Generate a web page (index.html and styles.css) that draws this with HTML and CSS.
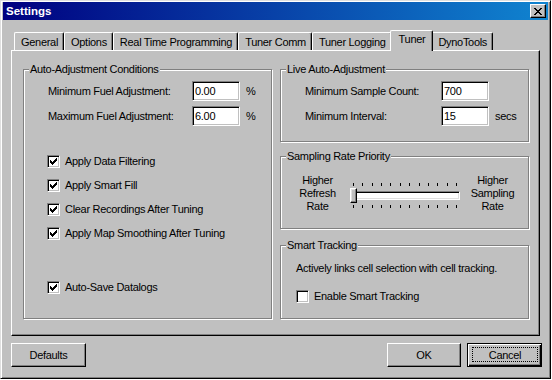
FILE: index.html
```html
<!DOCTYPE html>
<html lang="en">
<head>
    <meta charset="UTF-8">
    <title>Settings</title>
    <link rel="stylesheet" href="styles.css">
</head>
<body>

    <div class="window">
        <!-- Title bar -->
        <div class="titlebar">
            <span class="title">Settings</span>
            <button class="close-btn" title="Close">
                <svg width="8" height="7" viewBox="0 0 8 7"><path d="M0 0h2v1H0zM6 0h2v1H6zM1 1h2v1H1zM5 1h2v1H5zM2 2h4v1H2zM3 3h2v1H3zM2 4h4v1H2zM1 5h2v1H1zM5 5h2v1H5zM0 6h2v1H0zM6 6h2v1H6z" fill="#000"/></svg>
            </button>
        </div>

        <div class="dialog">
            <!-- Tabs -->
            <div class="tabs">
                <div class="tab">General</div>
                <div class="tab">Options</div>
                <div class="tab">Real Time Programming</div>
                <div class="tab">Tuner Comm</div>
                <div class="tab">Tuner Logging</div>
                <div class="tab active">Tuner</div>
                <div class="tab">DynoTools</div>
            </div>

            <div class="panel">
                <!-- Left group -->
                <div class="group group-left">
                    <div class="group-title">Auto-Adjustment Conditions</div>
                    <div class="field-row">
                        <span class="field-label">Minimum Fuel Adjustment:</span>
                        <input class="edit" type="text" value="0.00">
                        <span class="unit">%</span>
                    </div>
                    <div class="field-row">
                        <span class="field-label">Maximum Fuel Adjustment:</span>
                        <input class="edit" type="text" value="6.00">
                        <span class="unit">%</span>
                    </div>

                    <div class="checks">
                        <div class="check-row"><span class="checkbox"><svg width="7" height="7" viewBox="0 0 7 7"><path d="M0 2h1v3H0zM1 3h1v3H1zM2 4h1v3H2zM3 3h1v3H3zM4 2h1v3H4zM5 1h1v3H5zM6 0h1v3H6z" fill="#000"/></svg></span>Apply Data Filtering</div>
                        <div class="check-row"><span class="checkbox"><svg width="7" height="7" viewBox="0 0 7 7"><path d="M0 2h1v3H0zM1 3h1v3H1zM2 4h1v3H2zM3 3h1v3H3zM4 2h1v3H4zM5 1h1v3H5zM6 0h1v3H6z" fill="#000"/></svg></span>Apply Smart Fill</div>
                        <div class="check-row"><span class="checkbox"><svg width="7" height="7" viewBox="0 0 7 7"><path d="M0 2h1v3H0zM1 3h1v3H1zM2 4h1v3H2zM3 3h1v3H3zM4 2h1v3H4zM5 1h1v3H5zM6 0h1v3H6z" fill="#000"/></svg></span>Clear Recordings After Tuning</div>
                        <div class="check-row"><span class="checkbox"><svg width="7" height="7" viewBox="0 0 7 7"><path d="M0 2h1v3H0zM1 3h1v3H1zM2 4h1v3H2zM3 3h1v3H3zM4 2h1v3H4zM5 1h1v3H5zM6 0h1v3H6z" fill="#000"/></svg></span>Apply Map Smoothing After Tuning</div>
                        <div class="check-row autosave"><span class="checkbox"><svg width="7" height="7" viewBox="0 0 7 7"><path d="M0 2h1v3H0zM1 3h1v3H1zM2 4h1v3H2zM3 3h1v3H3zM4 2h1v3H4zM5 1h1v3H5zM6 0h1v3H6z" fill="#000"/></svg></span>Auto-Save Datalogs</div>
                    </div>
                </div>

                <!-- Right column -->
                <div class="right-col">
                    <div class="group group-live">
                        <div class="group-title">Live Auto-Adjustment</div>
                        <div class="field-row">
                            <span class="field-label narrow">Minimum Sample Count:</span>
                            <input class="edit" type="text" value="700">
                        </div>
                        <div class="field-row">
                            <span class="field-label narrow">Minimum Interval:</span>
                            <input class="edit" type="text" value="15">
                            <span class="unit">secs</span>
                        </div>
                    </div>

                    <div class="group group-rate">
                        <div class="group-title">Sampling Rate Priority</div>
                        <div class="rate-row">
                            <div class="rate-label">Higher<br>Refresh<br>Rate</div>
                            <div class="slider">
                                <div class="ticks"><i></i><i></i><i></i><i></i><i></i><i></i><i></i><i></i><i></i><i></i><i></i><i></i></div>
                                <div class="track">
                                    <div class="channel"></div>
                                    <span class="thumb"></span>
                                </div>
                                <div class="ticks"><i></i><i></i><i></i><i></i><i></i><i></i><i></i><i></i><i></i><i></i><i></i><i></i></div>
                            </div>
                            <div class="rate-label">Higher<br>Sampling<br>Rate</div>
                        </div>
                    </div>

                    <div class="group group-smart">
                        <div class="group-title">Smart Tracking</div>
                        <div class="smart-text">Actively links cell selection with cell tracking.</div>
                        <div class="check-row"><span class="checkbox"></span>Enable Smart Tracking</div>
                    </div>
                </div>
            </div>

            <!-- Bottom buttons -->
            <div class="buttons">
                <button class="btn">Defaults</button>
                <div class="btn-group">
                    <button class="btn">OK</button>
                    <button class="btn default"><span class="focus-ring">Cancel</span></button>
                </div>
            </div>
        </div>
    </div>

</body>
</html>
```

FILE: styles.css
```css
/* --- Page --- */
* { box-sizing: border-box; }

body {
    margin: 0;
    background: #fff;
    font-family: "Liberation Sans", Arial, sans-serif;
    font-size: 11px;
    letter-spacing: -0.3px;
    color: #000;
}

/* --- Window frame --- */
.window {
    width: 551px; height: 379px;
    background: #c0c0c0;
    border: 1px solid;
    border-color: #dfdfdf #000 #000 #dfdfdf;
    box-shadow: inset 1px 1px #fff, inset -1px -1px #808080;
    padding: 1px 2px 0 2px;
    display: flex; flex-direction: column;
}

.titlebar {
    height: 18px;
    display: flex; align-items: center; justify-content: space-between;
    padding: 0 2px 0 3px;
    background: linear-gradient(to right, #000080, #1084d0);
}
.title {
    color: #fff; font-weight: bold; font-size: 11.5px; letter-spacing: 0;
}
.close-btn {
    width: 16px; height: 14px; padding: 0;
    display: flex; align-items: center; justify-content: center;
    background: #c0c0c0;
    border: 1px solid; border-color: #fff #000 #000 #fff;
    box-shadow: inset -1px -1px #808080;
}

/* --- Dialog body --- */
.dialog { padding: 10px 8px 0 8px; }

/* --- Tabs --- */
.tabs {
    display: flex; align-items: flex-end;
    padding-left: 3px;
}
.tab {
    height: 18px;
    padding: 1px 5px 0 6px;
    line-height: 17px;
    white-space: nowrap;
    background: #c0c0c0;
    border-top: 1px solid #fff; border-left: 1px solid #fff; border-right: 1px solid #000;
    border-radius: 2px 2px 0 0;
    box-shadow: inset -1px 0 #808080;
}
.tab.active {
    height: 21px;
    margin: 0 -2px -1px -2px;
    padding: 0 7px 0 8px;
    position: relative; z-index: 1;
}

.panel {
    height: 286px;
    display: flex; gap: 8px; align-items: flex-start;
    padding: 18px 10px 0 11px;
    border: 1px solid; border-color: #fff #000 #000 #fff;
    box-shadow: inset -1px -1px #808080;
}

/* --- Group boxes --- */
.group {
    width: 249px;
    border: 1px solid #808080;
    box-shadow: 1px 1px #fff, inset 1px 1px #fff;
    padding-left: 24px;
}
.group-title {
    width: fit-content;
    margin: -7px 0 0 -19px;
    padding: 0 1px;
    line-height: 13px;
    background: #c0c0c0;
}
.group-left { padding-bottom: 24px; }

.field-row {
    display: flex; align-items: center;
    height: 20px; margin-top: 5px;
}
.field-label { width: 144px; }
.field-label.narrow { width: 136px; }
.edit {
    width: 48px; height: 20px;
    padding: 0 2px; margin: 0;
    font: inherit; letter-spacing: inherit; color: #000;
    background: #fff;
    border: 1px solid; border-color: #808080 #fff #fff #808080;
    box-shadow: inset 1px 1px #000, inset -1px -1px #c0c0c0;
    outline: none;
}
.unit { margin-left: 6px; }

/* --- Check boxes --- */
.checks { margin-top: 29px; margin-left: -1px; }
.check-row {
    display: flex; align-items: center;
    height: 13px; line-height: 13px;
    margin-bottom: 11px;
}
.check-row.autosave { margin-top: 41px; margin-bottom: 0; }
.checkbox {
    width: 13px; height: 13px;
    margin-right: 5px;
    display: flex; align-items: center; justify-content: center;
    background: #fff;
    border: 1px solid; border-color: #808080 #fff #fff #808080;
    box-shadow: inset 1px 1px #000, inset -1px -1px #c0c0c0;
}

/* --- Right column --- */
.right-col { display: flex; flex-direction: column; }
.group-live { padding-bottom: 15px; }

.group-rate { margin-top: 14px; padding: 0 0 15px 7px; }
.group-rate .group-title { margin-left: -2px; }
.rate-row {
    display: flex; align-items: center; gap: 3px;
    margin-top: 11px;
}
.rate-label {
    width: 59px;
    text-align: center; line-height: 13px;
}
.slider { width: 110px; margin-top: 4px; }
.ticks {
    display: flex; justify-content: space-between;
    margin: 0 3px;
}
.ticks i { width: 1px; height: 3px; background: #000; }
.track {
    position: relative;
    height: 15px; margin: 2px 0 2px 0;
    display: flex; align-items: center;
}
.channel {
    width: 100%; height: 9px;
    background: #fff;
    border: 1px solid; border-color: #808080 #fff #fff #808080;
    box-shadow: inset 1px 1px #000, inset -1px -1px #dfdfdf;
}
.thumb {
    position: absolute; left: 0; top: 0;
    width: 7px; height: 15px;
    background: #c0c0c0;
    border: 1px solid; border-color: #fff #000 #000 #fff;
    box-shadow: inset -1px -1px #808080, inset 1px 1px #dfdfdf;
}

.group-smart { margin-top: 16px; padding: 0 0 15px 15px; }
.group-smart .group-title { margin-left: -10px; }
.smart-text { margin-top: 10px; line-height: 13px; }
.group-smart .check-row { margin-top: 15px; margin-bottom: 0; }

/* --- Buttons --- */
.buttons {
    display: flex; justify-content: space-between;
    margin: 7px -2px 0 0;
}
.btn-group { display: flex; gap: 6px; }
.btn {
    width: 75px; height: 24px; padding: 0;
    display: flex; align-items: center; justify-content: center;
    font: inherit; letter-spacing: inherit; color: #000;
    background: #c0c0c0;
    border: 1px solid; border-color: #fff #000 #000 #fff;
    box-shadow: inset -1px -1px #808080;
}
.btn-group .btn:first-child { width: 74px; }
.btn.default {
    border-color: #000;
    box-shadow: inset 1px 1px #fff, inset -1px -1px #000, inset -2px -2px #808080;
}
.focus-ring {
    align-self: stretch; flex: 1;
    margin: 3px 3px 4px 4px;
    display: flex; align-items: center; justify-content: center;
    border: 1px dotted #000;
}
```
